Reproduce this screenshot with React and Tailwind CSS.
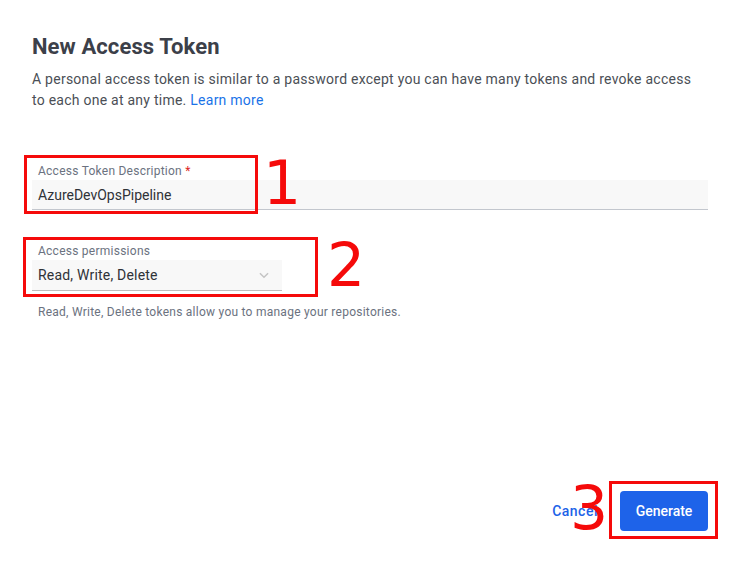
import React from "react";

const Field = ({ label, required, children }) => (
   <div className="flex flex-col">
      <label className="text-xs tracking-[0.25px] text-[#6b7280] px-1.5 leading-4 mb-[1px]">
         {label}
         {required && <span className="text-[#dc2626]"> *</span>}
      </label>
      {children}
   </div>
);

const Callout = ({ n, box, num }) => (
   <>
      <div className={`absolute border-[3px] border-[#f50a0a] ${box}`}></div>
      <span className={`absolute text-[#f50a0a] text-[60px] leading-none font-['DejaVu_Sans',sans-serif] ${num}`}>{n}</span>
   </>
);

export default function App() {
   return (
      <div className="relative w-[738px] h-[563px] bg-white font-['Roboto',sans-serif] overflow-hidden">
         <div className="px-8 pt-[33px] flex flex-col h-full">
            <h1 className="text-[22px] tracking-[0.1px] font-bold text-[#3c4049] leading-7">New Access Token</h1>
            <p className="mt-[8px] text-sm tracking-[0.25px] leading-[21px] text-[#4b4f56] max-w-[670px]">
               A personal access token is similar to a password except you can have many tokens and revoke access to each one at any time.{" "}
               <a href="#" className="text-[#1a73e8]">Learn more</a>
            </p>

            <div className="mt-[52px] w-[676px]">
               <Field label="Access Token Description" required>
                  <div className="h-[30px] bg-[#f8f8f8] border-b border-[#c3c7ce] flex items-center px-1.5 text-sm text-[#2f3237]">
                     AzureDevOpsPipeline
                  </div>
               </Field>
            </div>

            <div className="mt-[33px] w-[250px]">
               <Field label="Access permissions">
                  <div className="h-[31px] bg-[#f8f8f8] border-b border-[#bdbdbd] flex items-center justify-between px-1.5 text-sm tracking-[0.2px] text-[#2f3237]">
                     <span>Read, Write, Delete</span>
                     <svg width="14" height="14" viewBox="0 0 24 24" fill="none" stroke="#c4c4c4" strokeWidth="2.5" className="mr-[5px]">
                        <path d="M5 9l7 7 7-7" />
                     </svg>
                  </div>
               </Field>
            </div>
            <p className="mt-[13px] px-1.5 text-xs tracking-[0.25px] text-[#6b7280]">Read, Write, Delete tokens allow you to manage your repositories.</p>

            <div className="mt-auto mb-8 flex items-center justify-end gap-[22px] mr-[-2px]">
               <button className="text-sm tracking-[0.5px] font-medium text-[#1d63e8] px-0">Cancel</button>
               <button className="h-10 w-[88px] rounded bg-[#1e63e9] text-white text-sm font-medium">Generate</button>
            </div>
         </div>

         <Callout n="1" box="left-[24px] top-[155px] w-[234px] h-[59px]" num="left-[263px] top-[153px]" />
         <Callout n="2" box="left-[23px] top-[237px] w-[295px] h-[60px]" num="left-[327px] top-[235px]" />
         <Callout n="3" box="left-[609px] top-[481px] w-[109px] h-[58px]" num="left-[570px] top-[478px]" />
      </div>
   );
}
